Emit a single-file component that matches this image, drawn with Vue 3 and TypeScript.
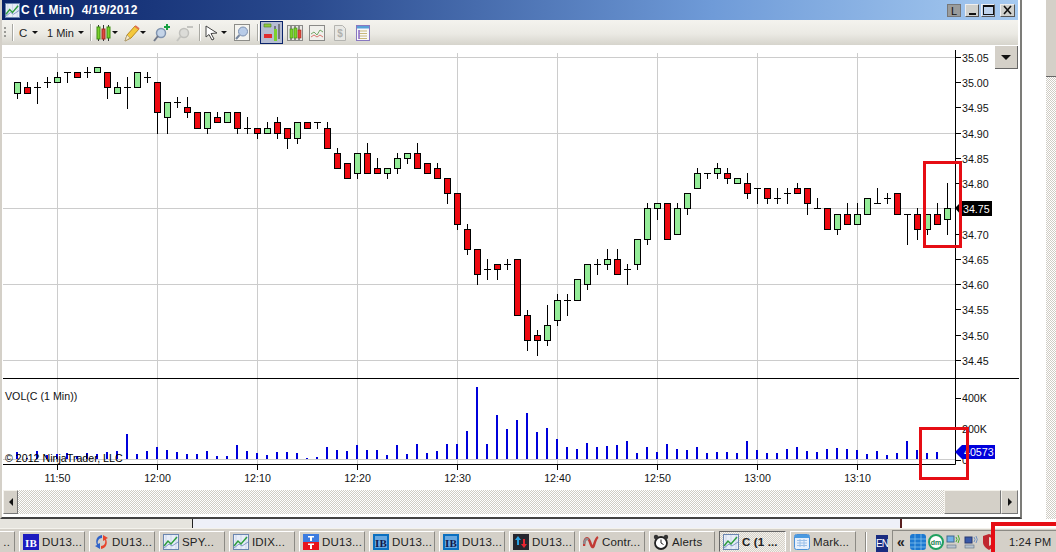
<script setup lang="ts">
type Kind = 'r' | 'g' | 'd'
type Raw = [number, number, Kind, number?, number?]

const seg = (base: number, rows: Raw[]) =>
  rows.map(([t, b, k, h, l]) => ({
    top: Math.round(base + t / 3),
    bottom: Math.round(base + b / 3),
    high: Math.round(base + (h ?? t) / 3),
    low: Math.round(base + (l ?? b) / 3),
    kind: k,
  }))

const rawCandles = [
  ...seg(50, [
    [97, 128, 'g', 97, 143], [112, 128, 'r', 97, 128], [112, 112, 'd', 97, 158], [97, 97, 'd', 82, 112],
    [82, 97, 'g', 67, 97], [67, 67, 'd', 67, 97], [67, 82, 'r'], [67, 67, 'd', 52, 82], [52, 67, 'g'],
    [67, 112, 'r', 67, 143], [112, 128, 'g', 97, 128], [112, 112, 'd', 82, 173], [67, 112, 'g'],
    [82, 82, 'd', 67, 97], [97, 187, 'r', 97, 250], [157, 202, 'g', 157, 250], [157, 157, 'd', 142, 172],
    [172, 187, 'r', 142, 202], [187, 235, 'r'], [187, 235, 'g', 187, 250], [202, 217, 'r', 187, 217],
    [187, 217, 'g'], [187, 235, 'r', 187, 250], [235, 235, 'd', 202, 250], [235, 250, 'r', 235, 265],
    [235, 250, 'g', 217, 250], [217, 250, 'r', 202, 265], [235, 265, 'r', 235, 295], [217, 265, 'g', 217, 280],
    [217, 235, 'r'], [217, 217, 'd', 217, 235], [235, 295, 'r', 217, 295],
  ]),
  ...seg(130, [
    [70, 115, 'r', 55, 115], [100, 145, 'r'], [70, 130, 'g', 70, 145], [70, 130, 'r', 40, 130],
    [115, 130, 'r', 85, 130], [115, 130, 'g', 115, 145], [85, 115, 'g', 70, 130], [70, 85, 'g', 70, 100],
    [70, 115, 'r', 40, 115], [100, 130, 'r'], [115, 145, 'r', 100, 145], [145, 190, 'r', 145, 220],
    [190, 283, 'r', 190, 298], [298, 358, 'r', 283, 373], [358, 433, 'r', 358, 463], [418, 418, 'd', 388, 448],
    [403, 418, 'r', 403, 448], [403, 403, 'd', 388, 418], [388, 556, 'r'], [556, 631, 'r', 541, 661],
    [616, 631, 'r', 601, 676], [586, 631, 'g', 526, 646], [511, 571, 'g', 493, 586], [511, 511, 'd', 493, 556],
    [448, 511, 'g'], [403, 463, 'g', 403, 478], [403, 403, 'd', 388, 433], [388, 403, 'g', 358, 418],
    [388, 433, 'r', 358, 433],
  ]),
  ...seg(205, [[193, 193, 'd', 178, 238], [103, 178, 'g', 103, 193]]),
  ...seg(150, [
    [175, 268, 'g', 160, 283], [160, 175, 'g', 160, 208], [160, 268, 'r'], [175, 253, 'g', 160, 253],
    [130, 175, 'g', 130, 193], [70, 115, 'g', 55, 115], [70, 70, 'd', 70, 85], [55, 70, 'g', 40, 85],
    [70, 85, 'r', 55, 100], [85, 100, 'g'], [100, 130, 'r', 70, 145], [115, 115, 'd', 115, 160],
    [115, 145, 'r', 115, 160], [145, 145, 'd', 115, 160], [130, 130, 'd', 115, 160], [115, 130, 'r', 100, 130],
    [115, 160, 'r', 115, 193], [175, 175, 'd', 145, 175], [175, 238, 'r'], [193, 238, 'g', 193, 253],
    [193, 223, 'r', 160, 223], [193, 223, 'g', 160, 223], [145, 193, 'g'], [160, 160, 'd', 115, 160],
    [145, 145, 'd', 130, 160], [130, 193, 'r'], [193, 193, 'd', 193, 283], [193, 238, 'r', 175, 268],
    [193, 238, 'g', 193, 253], [193, 223, 'r', 160, 223], [175, 208, 'g', 100, 253],
  ]),
]
const candles = rawCandles.map((c, i) => ({ ...c, x: 17.5 + i * 10 }))

const volTops = [
  217, 235, 213, 225, 222, 220, 228, 220, 222, 217, 213, 162, 222, 213, 201, 210, 216, 222, 222, 213, 228, 228, 195, 213,
  219, 225, 216, 216, 219, 234, 231, 201, 210, 213, 195, 210, 210, 225, 195, 222, 192, 219, 213, 192, 192, 153, 21, 192,
  105, 147, 120, 99, 156, 144, 177, 201, 207, 189, 201, 198, 195, 183, 219, 201, 216, 192, 207, 210, 201, 219, 216, 216,
  219, 183, 210, 219, 219, 207, 201, 213, 216, 207, 204, 207, 210, 222, 213, 225, 219, 183, 210, 219, 216,
]
const volumes = volTops.map((t, i) => {
  const y = Math.round(380 + t / 3)
  return { x: 16 + i * 10, y, h: 459 - y }
})

const prices = Array.from({ length: 13 }, (_, i) => {
  const y = Math.round(56.9 + 25.25 * i) + 0.5
  return { y, label: (35.05 - i * 0.05).toFixed(2), grid: i % 3 === 0 }
})
const times = ['11:50', '12:00', '12:10', '12:20', '12:30', '12:40', '12:50', '13:00', '13:10'].map((label, i) => ({
  label,
  x: 57.5 + i * 100,
}))

const title = 'C (1 Min)  4/19/2012'

const tasks = [
  { icon: 'blank', label: '..', clipped: true },
  { icon: 'ibflat', label: 'DU13...' },
  { icon: 'sync', label: 'DU13...' },
  { icon: 'chart', label: 'SPY...' },
  { icon: 'chart', label: 'IDIX...' },
  { icon: 'tt', label: 'DU13...' },
  { icon: 'ib', label: 'DU13...' },
  { icon: 'ib', label: 'DU13...' },
  { icon: 'updown', label: 'DU13...' },
  { icon: 'wave', label: 'Contr...' },
  { icon: 'clock', label: 'Alerts' },
  { icon: 'chart', label: 'C (1 ...', active: true },
  { icon: 'win', label: 'Mark...' },
]
</script>

<template>
  <div class="screen">
    <svg class="defs" aria-hidden="true">
      <symbol id="chart" viewBox="0 0 16 16">
        <rect x=".5" y=".5" width="15" height="15" fill="#e8eef8" stroke="#6a86b0" />
        <path d="M3 1v14M8 1v14M13 1v14" stroke="#b8c8e0" stroke-width=".6" />
        <path d="M1 14 6 10l3 2 6-4" fill="none" stroke="#8098c8" />
        <path d="M1 12 5 7l3 3 6-7" fill="none" stroke="#2e9e3e" stroke-width="1.5" />
      </symbol>
      <symbol id="ibflat" viewBox="0 0 16 16">
        <rect width="16" height="16" fill="#1c1cc0" />
        <text x="8" y="12.5" text-anchor="middle" class="ibt">IB</text>
      </symbol>
      <symbol id="ib" viewBox="0 0 16 16">
        <rect width="16" height="16" fill="#0a6fc0" />
        <rect x="2" y="2" width="12" height="12" fill="#68a8e0" />
        <text x="8" y="12.5" text-anchor="middle" class="ibt dark">IB</text>
      </symbol>
      <symbol id="sync" viewBox="0 0 16 16">
        <path d="M9 1C4 2 2 6 4 11l-2 1 5 3V9l-2 1C4 7 6 4 9 4z" fill="#2f62c8" />
        <path d="M8 15c5-1 7-5 5-10l2-1-5-3v6l2-1c1 3-1 6-4 6z" fill="#e8452c" />
      </symbol>
      <symbol id="tt" viewBox="0 0 16 16">
        <rect width="16" height="8" fill="#3c7ce0" />
        <rect y="8" width="16" height="8" fill="#e8141c" />
        <path d="M5 2h6v1.500H9V7H7V3.500H5zM5 9.500h6V11H9v4H7v-4H5z" fill="#fff" />
      </symbol>
      <symbol id="updown" viewBox="0 0 16 16">
        <rect width="16" height="16" fill="#26262e" />
        <path d="M5 2l3 4H6v5H4V6H2z" fill="#2aa0e0" />
        <path d="M11 14l-3-4h2V5h2v5h2z" fill="#e82430" />
      </symbol>
      <symbol id="wave" viewBox="0 0 16 16">
        <path d="M1 12C1 3 5 2 7 8s3 6 4 3 2-7 4-8" fill="none" stroke="#c23a34" stroke-width="2.5" />
        <path d="M1 10C2 5 4 4 5 6" fill="none" stroke="#8c8c90" stroke-width="2.5" />
      </symbol>
      <symbol id="clock" viewBox="0 0 16 16">
        <circle cx="8" cy="9" r="6" fill="#fff" stroke="#222" stroke-width="1.8" />
        <circle cx="3" cy="3" r="2.2" fill="#333" />
        <circle cx="13" cy="3" r="2.2" fill="#333" />
        <path d="M8 5.500V9l2.500 1.500" fill="none" stroke="#222" />
      </symbol>
      <symbol id="win" viewBox="0 0 16 16">
        <rect x=".5" y=".5" width="15" height="15" rx="2" fill="#e8f0fb" stroke="#4a90d8" />
        <rect x="1" y="1" width="14" height="3" fill="#4a9ae0" />
        <path d="M3 6.500h10M3 9h10M3 11.500h10M6 5v8M10 5v8" stroke="#9cc0e8" />
      </symbol>
      <symbol id="blank" viewBox="0 0 16 16"></symbol>
    </svg>

    <div class="main">
      <section class="window">
        <header class="titlebar">
          <svg class="title-icon" width="15" height="15"><use href="#chart" /></svg>
          <span class="title-text">{{ title }}</span>
          <div class="title-buttons">
            <span class="tbtn l">L</span>
            <span class="tbtn min"><i></i></span>
            <span class="tbtn max"><i></i></span>
            <span class="tbtn x">
              <svg width="11" height="10" viewBox="0 0 11 10"><path d="M2 1l7 8M9 1 2 9" stroke="#111" stroke-width="1.6" fill="none" /></svg>
            </span>
          </div>
        </header>

        <div class="toolbar">
          <span class="grip"></span>
          <span class="sep first"></span>
          <span class="drop c">C<b class="arrow"></b></span>
          <span class="drop min1">1 Min<b class="arrow"></b></span>
          <span class="sep s2"></span>
          <svg class="ti candle" width="15" height="20" viewBox="0 0 15 20">
            <path d="M2.500 2v16M7.500 2v16M12.500 2v16" stroke="#333" />
            <rect x="1" y="4" width="3" height="12" fill="#7cd22c" stroke="#3c8c10" />
            <rect x="6" y="6" width="3" height="10" fill="#e2483c" stroke="#a02a20" />
            <rect x="11" y="4" width="3" height="11" fill="#7cd22c" stroke="#3c8c10" />
          </svg>
          <b class="arrow a1"></b>
          <svg class="ti pencil" width="16" height="18" viewBox="0 0 16 18">
            <path d="M1 17l2-6L11 2l4 3-8 9z" fill="#f4c83c" stroke="#b88a20" />
            <path d="M1 17l2-6 3 3z" fill="#f8e8c0" stroke="#888" stroke-width=".5" />
            <path d="M11 2l4 3" stroke="#e07050" stroke-width="2" />
          </svg>
          <b class="arrow a2"></b>
          <svg class="ti zoomin" width="17" height="18" viewBox="0 0 17 18">
            <circle cx="8" cy="9" r="4.500" fill="#c4d4e8" stroke="#8094b0" stroke-width="1.5" />
            <path d="M5 12l-4 5" stroke="#707888" stroke-width="2" />
            <path d="M14 0v6M11 3h6" stroke="#18a040" stroke-width="2" />
          </svg>
          <svg class="ti zoomout" width="17" height="18" viewBox="0 0 17 18">
            <circle cx="8" cy="9" r="4.500" fill="#dcdcd8" stroke="#c0c0bc" stroke-width="1.5" />
            <path d="M5 12l-4 5" stroke="#c4c4c0" stroke-width="2" />
            <path d="M11 3h6" stroke="#c4c4c0" stroke-width="2" />
          </svg>
          <span class="sep s3"></span>
          <svg class="ti cursor" width="14" height="16" viewBox="0 0 14 16">
            <path d="M1 1v11l3-2.500 3 5.500 2-1-3-5.500 6-.5z" fill="#fff" stroke="#444" />
          </svg>
          <b class="arrow a3"></b>
          <svg class="ti find" width="16" height="18" viewBox="0 0 16 18">
            <rect x=".5" y=".5" width="15" height="16" fill="#f4f4f0" stroke="#8c8c88" />
            <circle cx="9" cy="7.500" r="4.500" fill="#b8cce8" stroke="#7c90b0" />
            <path d="M5.500 11 2 15" stroke="#7888a0" stroke-width="2" />
          </svg>
          <span class="sep s4"></span>
          <span class="active-tool">
            <svg width="18" height="19" viewBox="0 0 18 19">
              <path d="M1 1h7v3H1z" fill="#8cc83c" stroke="#4c8020" stroke-width=".6" />
              <path d="M1 11h8v4H1z" fill="#e02c30" />
              <path d="M12 3v15M16 1v15" stroke="#333" />
              <rect x="11" y="6" width="3" height="12" fill="#7cd22c" />
            </svg>
          </span>
          <svg class="ti data" width="16" height="18" viewBox="0 0 16 18">
            <rect x=".5" y="1.500" width="15" height="15" fill="#e8e8e4" stroke="#8a8a88" />
            <path d="M4 2v14M8 2v14M12 2v14" stroke="#333" />
            <rect x="3" y="5" width="3" height="9" fill="#7cd22c" stroke="#3c8c10" stroke-width=".6" />
            <rect x="7" y="4" width="3" height="10" fill="#7cd22c" stroke="#3c8c10" stroke-width=".6" />
            <rect x="11" y="6" width="3" height="8" fill="#e2483c" stroke="#a02a20" stroke-width=".6" />
          </svg>
          <svg class="ti lines" width="16" height="16" viewBox="0 0 16 16">
            <rect x=".5" y=".5" width="15" height="15" fill="#f0f0ec" stroke="#8a8a88" />
            <path d="M2 9l3-2 3 3 3-5 3 2" fill="none" stroke="#74a868" />
            <path d="M2 12l3-2 3 2 3-2 3 2" fill="none" stroke="#d87870" />
          </svg>
          <svg class="ti dollar" width="12" height="16" viewBox="0 0 12 16">
            <path d="M.5.500h8l3 3v12H.5z" fill="#e8e8e4" stroke="#b4b4b0" />
            <text x="6" y="12" text-anchor="middle" class="dollar-t">$</text>
          </svg>
          <svg class="ti sheet" width="14" height="16" viewBox="0 0 14 16">
            <rect x=".5" y=".5" width="13" height="15" fill="#f8f8f8" stroke="#8878c0" />
            <rect x="1" y="1" width="12" height="2.5" fill="#58a0d8" />
            <path d="M3 6h8M3 8.500h8M3 11h8M3 13.500h8" stroke="#c8b878" />
            <path d="M3 5v9" stroke="#8868c8" stroke-width="1.5" />
          </svg>
        </div>

        <div class="chart">
          <svg class="plot" width="1017" height="445" viewBox="3 45 1017 445">
            <g class="grid">
              <path v-for="p in prices.filter((q) => q.grid)" :key="p.label" :d="`M3 ${p.y}H955`" />
              <path v-for="t in times" :key="t.label" :d="`M${t.x} 53V464`" />
              <path d="M3 459.500H955" />
            </g>

            <g>
              <g v-for="c in candles" :key="c.x">
                <path :d="`M${c.x} ${c.high}V${c.low + 1}`" stroke="#000" fill="none" />
                <path v-if="c.kind === 'd'" :d="`M${c.x - 3.5} ${c.top + 0.5}h7`" stroke="#000" fill="none" />
                <rect
                  v-else
                  :x="c.x - 3"
                  :y="c.top + 0.5"
                  width="6"
                  :height="c.bottom - c.top"
                  :fill="c.kind === 'r' ? '#ee0810' : '#94ec98'"
                  stroke="#000"
                />
              </g>
            </g>

            <rect v-for="v in volumes" :key="v.x" :x="v.x" :y="v.y" width="2" :height="v.h" fill="#0000dc" />

            <g class="axis">
              <path d="M955.500 50V464.500M3 464.500H955.500M3 378.500H1019" />
              <path v-for="p in prices" :key="p.label" :d="`M955 ${p.y}h6`" />
              <path d="M955 398.500h6M955 429.500h6M955 460.500h6" />
              <path v-for="t in times" :key="t.label" :d="`M${t.x} 465v5`" />
            </g>

            <g class="labels">
              <template v-for="p in prices" :key="p.label">
                <text v-if="p.label !== '34.75'" x="962" :y="p.y + 4">{{ p.label }}</text>
              </template>
              <text x="962" y="402">400K</text>
              <text x="962" y="433">200K</text>
              <text x="962" y="464">0</text>
              <text v-for="t in times" :key="t.label" :x="t.x" y="482" text-anchor="middle">{{ t.label }}</text>
              <text x="5" y="400">VOL(C (1 Min))</text>
              <text x="5" y="462" class="copy">© 2012 NinjaTrader, LLC</text>
            </g>

            <path d="M955 208l6-6v13z" fill="#000" />
            <rect x="961" y="201" width="31" height="15" fill="#000" />
            <text x="963" y="212.500" class="tag">34.75</text>

            <path d="M955 452l7-7v14z" fill="#0000dc" />
            <rect x="962" y="445" width="33" height="14" fill="#0000dc" />
            <text x="964" y="456" class="tag">40573</text>

            <rect x="924.500" y="162.500" width="36" height="84" class="mark" />
            <rect x="920.500" y="428.500" width="47" height="50" class="mark" />
          </svg>
          <span class="panel-drop"><b></b></span>
        </div>

        <div class="hscroll">
          <span class="sbtn left"><b></b></span>
          <span class="track"></span>
          <span class="thumb"></span>
          <span class="sbtn right"><b></b></span>
        </div>
      </section>

      <aside class="desk">
        <div class="vbar"><span class="vthumb"></span><span class="vtrack"></span></div>
      </aside>
    </div>

    <div class="strip">
      <span class="strip-left"></span>
      <span class="strip-mid"></span>
      <span class="strip-right"></span>
    </div>

    <footer class="taskbar">
      <div class="tasks">
        <div v-for="(t, i) in tasks" :key="i" class="task" :class="{ active: t.active, clipped: t.clipped }">
          <svg v-if="!t.clipped" width="16" height="16"><use :href="`#${t.icon}`" /></svg>
          <span>{{ t.label }}</span>
        </div>
      </div>
      <span class="task-sep"></span>
      <span class="lang">EN</span>
      <div class="tray">
        <span class="chev">«</span>
        <svg width="16" height="16" viewBox="0 0 16 16">
          <rect width="16" height="16" rx="3" fill="#1c78d0" />
          <path d="M0 5h16M0 9h16M0 13h16M5 0v16M11 0v16" stroke="#8cc8f0" stroke-width=".7" />
        </svg>
        <svg width="16" height="16" viewBox="0 0 16 16">
          <circle cx="8" cy="8" r="7" fill="#fff" stroke="#20a060" stroke-width="2" />
          <text x="8" y="11" text-anchor="middle" class="dm">dm</text>
        </svg>
        <svg width="16" height="16" viewBox="0 0 16 16">
          <rect x="1" y="2" width="7" height="6" fill="#70b0e8" stroke="#406890" />
          <rect x="1" y="11" width="9" height="3" fill="#b8c4d0" stroke="#607080" stroke-width=".6" />
          <path d="M10 3a4 4 0 0 1 0 5M12 1a7 7 0 0 1 0 8" fill="none" stroke="#48b030" />
        </svg>
        <svg width="15" height="16" viewBox="0 0 15 16">
          <rect x="1" y="3" width="7" height="6" fill="#3858a8" stroke="#283870" />
          <rect x="1" y="11" width="9" height="3" fill="#b8c4d0" stroke="#607080" stroke-width=".6" />
          <path d="M10 3a4 4 0 0 1 0 5M12 2a6 6 0 0 1 0 7" fill="none" stroke="#7090c0" />
        </svg>
        <svg class="shield" width="12" height="16" viewBox="0 0 12 16">
          <path d="M6 0l6 2v6c0 4-3 6-6 8-3-2-6-4-6-8V2z" fill="#c02830" />
          <path d="M6 3l3 1v4c0 2-1 3-3 4z" fill="#e8d8d0" />
        </svg>
        <span class="clock">1:24 PM</span>
      </div>
      <span class="clock-mark"></span>
    </footer>
  </div>
</template>

<style>
html,
body {
  margin: 0;
  background: #fff;
}
</style>

<style scoped>
.screen {
  position: relative;
  width: 1056px;
  height: 552px;
  overflow: hidden;
  display: flex;
  flex-direction: column;
  background: #fff;
  font-family: "Liberation Sans", Arial, sans-serif;
  color: #111;
}
.defs {
  display: none;
}
.main {
  display: flex;
  height: 519px;
}
.window {
  box-sizing: border-box;
  width: 1022px;
  height: 519px;
  border-left: 2px solid #d4d0c8;
  border-right: 2px solid #7c7c78;
  border-bottom: 2px solid #404040;
  display: flex;
  flex-direction: column;
}
.titlebar {
  height: 20px;
  margin-right: 2px;
  display: flex;
  align-items: center;
  background: linear-gradient(90deg, #0a246a 0%, #2a4a8e 30%, #6f9bd8 70%, #a6caf0 100%);
  color: #fff;
}
.title-icon {
  margin-left: 3px;
}
.title-text {
  margin-left: 1px;
  font-size: 12px;
  font-weight: 700;
  letter-spacing: 0.3px;
  white-space: pre;
}
.title-buttons {
  margin-left: auto;
  margin-right: 3px;
  display: flex;
  gap: 2px;
}
.tbtn {
  box-sizing: border-box;
  width: 14px;
  height: 13px;
  display: flex;
  align-items: center;
  justify-content: center;
  background: #cfd0cc;
  border: 1px solid;
  border-color: #eee #555 #555 #eee;
  font-size: 11px;
  color: #111;
}
.tbtn.l {
  margin-right: 2px;
  background: #9a9c9c;
  border-color: #777;
  padding-top: 1px;
}
.tbtn.min i {
  width: 7px;
  height: 2px;
  background: #111;
  margin-top: 7px;
}
.tbtn.max {
  background: #c0d4ec;
  margin-right: 3px;
}
.tbtn.max i {
  box-sizing: border-box;
  width: 11px;
  height: 10px;
  border: 1px solid #111;
  border-top-width: 2px;
}
.tbtn.x {
  width: 15px;
}
.toolbar {
  height: 25px;
  margin-right: 2px;
  display: flex;
  align-items: center;
  background: linear-gradient(180deg, #f4f3ee 0%, #ebeae4 55%, #d6d4cc 100%);
  font-size: 11px;
  color: #222;
}
.grip {
  width: 2px;
  height: 12px;
  margin-left: 2px;
  background: repeating-linear-gradient(180deg, #9a9a96 0 2px, transparent 2px 4px);
}
.sep {
  flex: none;
  width: 1px;
  height: 17px;
  background: #a8a8a2;
  box-shadow: 1px 0 #fff;
}
.sep.first {
  margin-left: 6px;
}
.sep.s2 {
  margin-left: 5px;
}
.sep.s3 {
  margin-left: 6px;
}
.sep.s4 {
  margin-left: 7px;
}
.drop {
  flex: none;
  display: flex;
  align-items: center;
}
.drop.c {
  width: 28px;
  margin-left: 6px;
  font-size: 11.5px;
}
.drop.min1 {
  width: 38px;
}
.arrow {
  display: block;
  flex: none;
  width: 0;
  height: 0;
  border: 3px solid transparent;
  border-top: 3px solid #111;
  border-bottom-width: 0;
  margin-left: 5px;
}
.drop.min1 .arrow {
  margin-left: 4px;
}
.ti {
  flex: none;
}
.candle {
  margin-left: 5px;
}
.arrow.a1 {
  margin-left: 1px;
}
.pencil {
  margin-left: 6px;
}
.arrow.a2 {
  margin-left: 0;
}
.zoomin {
  margin-left: 7px;
}
.zoomout {
  margin-left: 6px;
}
.cursor {
  margin-left: 5px;
}
.arrow.a3 {
  margin-left: 2px;
}
.find {
  margin-left: 7px;
}
.active-tool {
  box-sizing: border-box;
  flex: none;
  width: 23px;
  height: 23px;
  margin-left: 2px;
  display: flex;
  align-items: center;
  justify-content: center;
  background: #b6bdd2;
  border: 1px solid #0a246a;
}
.data {
  margin-left: 4px;
}
.lines {
  margin-left: 6px;
}
.dollar {
  margin-left: 9px;
}
.sheet {
  margin-left: 10px;
}
.dollar-t {
  font: 700 10px "Liberation Sans", sans-serif;
  fill: #b0b0ac;
}
.chart {
  position: relative;
  height: 445px;
  margin-left: 1px;
  background: #fff;
}
.plot {
  display: block;
  background: #fff;
}
.grid path {
  stroke: #cccccc;
  fill: none;
}
.axis path {
  stroke: #000;
  fill: none;
}
.labels text {
  font: 10.67px "Liberation Sans", Arial, sans-serif;
  fill: #111;
}
.labels text.copy {
  fill: #000;
}
.tag {
  font: 10.67px "Liberation Sans", Arial, sans-serif;
  fill: #fff;
}
.mark {
  fill: none;
  stroke: #e60d14;
  stroke-width: 3;
}
.panel-drop {
  position: absolute;
  left: 992px;
  top: 1px;
  box-sizing: border-box;
  width: 23px;
  height: 23px;
  display: flex;
  align-items: center;
  justify-content: center;
  background: #d4d0c8;
  border-right: 1px solid #666;
  border-bottom: 1px solid #666;
}
.panel-drop b {
  width: 0;
  height: 0;
  border: 5px solid transparent;
  border-top: 5px solid #111;
  border-bottom-width: 0;
}
.hscroll {
  height: 27px;
  margin-left: 1px;
  padding-right: 2px;
  display: flex;
  align-items: flex-start;
  background: #fff;
}
.sbtn,
.thumb {
  box-sizing: border-box;
  background: #d4d0c8;
  border: 1px solid;
  border-color: #f4f2ec #777 #777 #f4f2ec;
}
.sbtn {
  flex: none;
  width: 15px;
  height: 24px;
  display: flex;
  align-items: center;
  justify-content: center;
}
.sbtn.right {
  width: 17px;
}
.thumb {
  flex: none;
  width: 57px;
  height: 24px;
}
.track {
  flex: 1;
  height: 24px;
  background: repeating-conic-gradient(#cfccc4 0 25%, #fff 0 50%) 0 0 / 2px 2px;
}
.sbtn b {
  width: 0;
  height: 0;
  border: 4px solid transparent;
}
.sbtn.left b {
  border-right: 4px solid #111;
  border-left-width: 0;
}
.sbtn.right b {
  border-left: 4px solid #111;
  border-right-width: 0;
}
.desk {
  flex: 1;
  display: flex;
  justify-content: flex-end;
}
.vbar {
  width: 10px;
  display: flex;
  flex-direction: column;
}
.vthumb {
  height: 76px;
  background: #d4d0c8;
  border-bottom: 1px solid #666;
}
.vtrack {
  flex: 1;
  background: repeating-conic-gradient(#cfccc4 0 25%, #fff 0 50%) 0 0 / 2px 2px;
}
.strip {
  height: 9px;
  display: flex;
}
.strip-left {
  width: 192px;
  background: #e6e4de;
  border-right: 1px solid #222;
}
.strip-mid {
  width: 707px;
  background: #eef0f8;
  border-right: 2px solid #5a2020;
}
.strip-right {
  flex: 1;
  background: #fff;
}
.taskbar {
  position: relative;
  height: 24px;
  display: flex;
  align-items: flex-end;
  background: #d4d0c8;
  border-top: 1px solid #f4f2ec;
  box-sizing: border-box;
}
.tasks {
  display: flex;
  gap: 4px;
  margin-left: -51px;
}
.task {
  box-sizing: border-box;
  flex: none;
  width: 66px;
  height: 21px;
  display: flex;
  align-items: center;
  gap: 3px;
  padding: 1px 0 0 3px;
  border: 1px solid;
  border-color: #fff #8c8a84 transparent #fff;
  font-size: 11.5px;
  letter-spacing: 0.15px;
  white-space: nowrap;
  color: #222;
}
.task svg {
  flex: none;
}
.task.clipped {
  justify-content: flex-end;
  padding: 1px 4px 0 0;
}
.task.active {
  width: 67px;
  border-color: #666 #fff transparent #666;
  background: repeating-conic-gradient(#d4d0c8 0 25%, #f4f2ec 0 50%) 0 0 / 2px 2px;
  font-weight: 700;
}
.ibt {
  font: 700 11px "Liberation Serif", serif;
  fill: #fff;
}
.ibt.dark {
  fill: #10184c;
}
.task-sep {
  flex: none;
  width: 1px;
  height: 20px;
  margin-left: 9px;
  background: #8c8a84;
  box-shadow: 1px 0 #fff;
}
.lang {
  box-sizing: border-box;
  flex: none;
  width: 12px;
  height: 17px;
  margin-left: 10px;
  overflow: hidden;
  background: #1a2c80;
  color: #fff;
  font-size: 10px;
  letter-spacing: -1px;
  line-height: 17px;
  white-space: nowrap;
}
.tray {
  box-sizing: border-box;
  flex: 1;
  height: 22px;
  margin-left: 4px;
  display: flex;
  align-items: center;
  padding-left: 4px;
  gap: 2px;
  border-left: 1px solid #8c8a84;
  border-top: 1px solid #8c8a84;
}
.chev {
  width: 11px;
  font-size: 14px;
  font-weight: 700;
  line-height: 14px;
  color: #222;
}
.dm {
  font: 700 7px "Liberation Sans", sans-serif;
  fill: #188050;
}
.shield {
  margin-left: 2px;
}
.clock {
  margin-left: 12px;
  font-size: 11px;
  letter-spacing: 0.2px;
  color: #222;
  white-space: nowrap;
}
.clock-mark {
  position: absolute;
  left: 991px;
  top: -7px;
  width: 90px;
  height: 60px;
  box-sizing: border-box;
  border: 4px solid #e60d14;
}
</style>
